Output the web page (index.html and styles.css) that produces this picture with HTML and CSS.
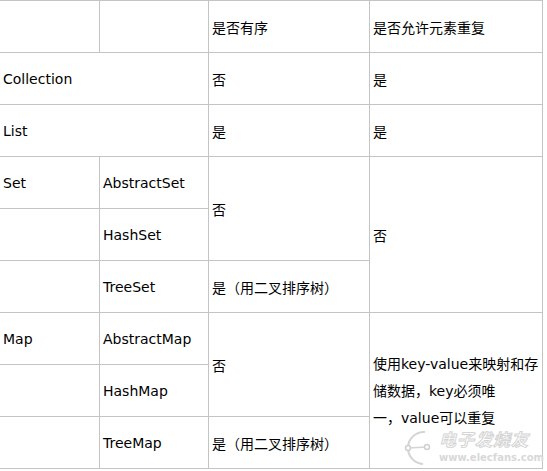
FILE: index.html
```html
<!DOCTYPE html>
<html lang="zh">
<head>
<meta charset="utf-8">
<link rel="stylesheet" href="styles.css">
</head>
<body>
<div class="page">
  <div class="grid">
    <div class="cell"></div>
    <div class="cell"></div>
    <div class="cell cjk">是否有序</div>
    <div class="cell cjk">是否允许元素重复</div>

    <div class="cell span-c2">Collection</div>
    <div class="cell cjk">否</div>
    <div class="cell cjk">是</div>

    <div class="cell span-c2">List</div>
    <div class="cell cjk">是</div>
    <div class="cell cjk">是</div>

    <div class="cell">Set</div>
    <div class="cell">AbstractSet</div>
    <div class="cell cjk span-r2">否</div>
    <div class="cell cjk span-r3">否</div>

    <div class="cell"></div>
    <div class="cell">HashSet</div>

    <div class="cell"></div>
    <div class="cell">TreeSet</div>
    <div class="cell cjk">是（用二叉排序树）</div>

    <div class="cell">Map</div>
    <div class="cell">AbstractMap</div>
    <div class="cell cjk span-r2">否</div>
    <div class="cell cjk span-r3 multi"><span>使用<span class="lat">key-value</span>来映射和存<br>储数据，<span class="lat">key</span>必须唯<br>一，<span class="lat">value</span>可以重复</span></div>

    <div class="cell"></div>
    <div class="cell">HashMap</div>

    <div class="cell"></div>
    <div class="cell">TreeMap</div>
    <div class="cell cjk">是（用二叉排序树）</div>
  </div>

  <div class="watermark">
    <svg class="wm-logo" width="40" height="40" viewBox="0 0 40 40">
      <path d="M28 2 A15 15 0 1 0 26 34" fill="none" stroke="#d4d4d4" stroke-width="2"/>
      <line x1="11" y1="18" x2="30" y2="17" stroke="#d4d4d4" stroke-width="1.5"/>
      <circle cx="11" cy="18" r="2.5" fill="#fff" stroke="#d0d0d0" stroke-width="1.5"/>
      <circle cx="30" cy="17" r="2.5" fill="#fff" stroke="#d0d0d0" stroke-width="1.5"/>
    </svg>
    <div class="wm-text">
      <div class="wm-cn">电子发烧友</div>
      <div class="wm-url">www.elecfans.com</div>
    </div>
  </div>
</div>
</body>
</html>
```

FILE: styles.css
```css
html, body {
  margin: 0;
  padding: 0;
  background: #fff;
}

.page {
  position: relative;
  width: 547px;
  height: 471px;
}

.grid {
  display: grid;
  grid-template-columns: 99px 108px 160px 172px;
  grid-auto-rows: 51px;
  gap: 1px;
  padding: 1px 1px 1px 0;
  background: #c4c4c4;
  width: max-content;
  font-family: "DejaVu Sans", Verdana, sans-serif;
  font-size: 14px;
  color: #000;
}

.cell {
  background: #fff;
  display: flex;
  align-items: center;
  padding-left: 3px;
  white-space: nowrap;
}

.cjk {
  font-family: "Noto Sans CJK SC", "DejaVu Sans", sans-serif;
  font-size: 14px;
}

.span-c2 { grid-column: span 2; }
.span-r2 { grid-row: span 2; }
.span-r3 { grid-row: span 3; }

.multi {
  line-height: 26px;
}

.lat {
  font-family: "DejaVu Sans", Verdana, sans-serif;
  font-size: 14px;
}

.watermark {
  position: absolute;
  left: 397px;
  top: 430px;
  display: flex;
  align-items: flex-start;
  gap: 2px;
  pointer-events: none;
}

.wm-text {
  display: flex;
  flex-direction: column;
}

.wm-cn {
  font-family: "Noto Sans CJK SC", sans-serif;
  font-size: 17px;
  font-weight: bold;
  font-style: italic;
  color: #fff;
  -webkit-text-stroke: 1px #d4d4d4;
  line-height: 18px;
  letter-spacing: 1px;
}

.wm-url {
  font-family: "DejaVu Sans", sans-serif;
  font-size: 10px;
  font-weight: bold;
  color: #d8d8d8;
  line-height: 12px;
  margin-top: 4px;
}
```
